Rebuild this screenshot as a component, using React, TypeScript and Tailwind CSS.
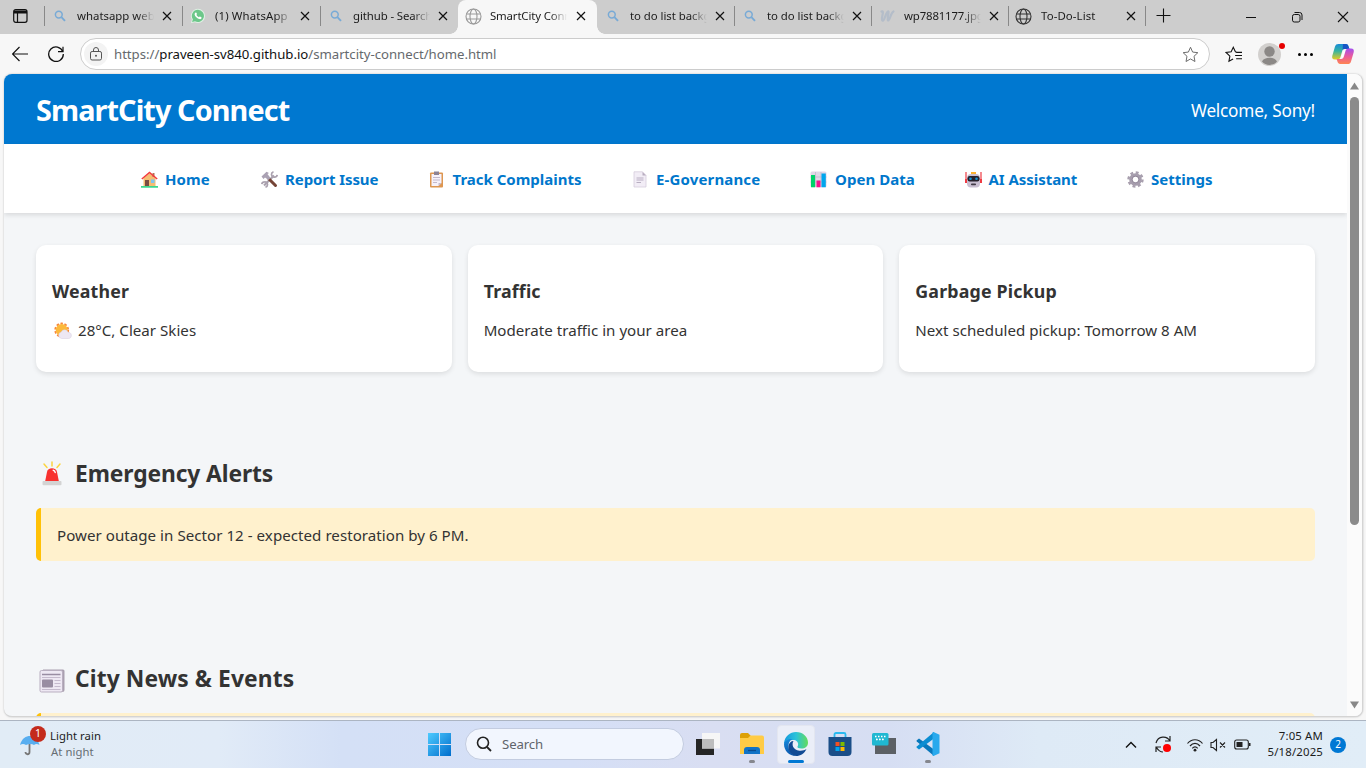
import React from "react";

type Kids = { children?: React.ReactNode };

const Svg = ({ className, box = "0 0 16 16", children }: Kids & { className: string; box?: string }) => (
  <svg className={`shrink-0 ${className}`} viewBox={box} fill="none">{children}</svg>
);

/* ---------- Browser tab icons ---------- */

const Magnifier = () => (
  <Svg className="size-4">
    <circle cx="6.8" cy="6.6" r="3.4" stroke="#78aad6" strokeWidth="1.5" />
    <path d="M9.4 9.2 13 12.8" stroke="#78aad6" strokeWidth="1.9" />
  </Svg>
);

const WhatsApp = () => (
  <Svg className="size-4">
    <path d="M8 .8a7 7 0 0 1 0 14.2 7.5 7.5 0 0 1-3.3-.8L.8 15.3l1.1-3.8A7.1 7.1 0 0 1 8 .8Z" fill="#dff0e4" />
    <path d="M8 1.8a6.1 6.1 0 1 1-3 11.5l-2.9.8.8-2.8A6.1 6.1 0 0 1 8 1.8Z" fill="#6cc78a" />
    <path d="M5.6 4.5c.5-.3.8 0 1 .6l.3.8c.1.5-.6.8-.5 1.1.5 1 1.4 1.8 2.5 2.3.4.1.7-.8 1.1-.7l1.3.6c.6.3.2 1.4-.5 1.8-1.7.8-6.2-2.3-6.2-4.8 0-.7.4-1.4 1-1.7Z" fill="#fff" />
  </Svg>
);

const Globe = ({ color }: { color: string }) => (
  <Svg className="size-[17px]" box="0 0 17 17">
    <g stroke={color} strokeWidth="1.1">
      <circle cx="8.5" cy="8.5" r="7.5" />
      <ellipse cx="8.5" cy="8.5" rx="3.5" ry="7.5" />
      <path d="M1.5 6h14M1.5 11h14" />
    </g>
  </Svg>
);

const WaveMark = () => (
  <Svg className="size-4">
    <path d="M2.500 3.500c2-1 1.500 1.500.8 4.500-.8 3.500-.3 5 .9 4.500C6 11.500 6.500 5 9 3.500c1.800-.8-1.500 8 0 9C10.800 13 11.500 5 14.500 3.500" stroke="#b4bdc9" strokeWidth="2.200" strokeLinecap="round" />
  </Svg>
);

const Close = () => (
  <Svg className="size-[10px]" box="0 0 10 10">
    <path d="m1 1 8 8M9 1 1 9" stroke="#111" strokeWidth="1.2" />
  </Svg>
);

type TabInfo = { title: string; icon: React.ReactNode; size: string; kind?: "active" | "plain" };

const tabs: TabInfo[] = [
  { title: "whatsapp web", icon: <Magnifier />, size: "w-[138px] tracking-[0px]" },
  { title: "(1) WhatsApp", icon: <WhatsApp />, size: "w-[138px] tracking-[0.12px]" },
  { title: "github - Search", icon: <Magnifier />, size: "w-[138px] tracking-[-0.1px]" },
  { title: "SmartCity Connect", icon: <Globe color="#999" />, size: "w-[139px] tracking-[-0.15px]", kind: "active" },
  { title: "to do list background", icon: <Magnifier />, size: "w-[137px] tracking-[-0.05px]", kind: "plain" },
  { title: "to do list background", icon: <Magnifier />, size: "w-[137px] tracking-[-0.05px]" },
  { title: "wp7881177.jpg", icon: <WaveMark />, size: "w-[137px] tracking-[-0.15px]" },
  { title: "To-Do-List", icon: <Globe color="#333" />, size: "w-[137px] tracking-[0.1px]" },
];

function Tab({ tab }: { tab: TabInfo }) {
  const active = tab.kind === "active";
  return (
    <div className={`relative flex h-[34px] shrink-0 items-center ${tab.size} ${active ? "rounded-t-lg bg-[#f7f7f7]" : "pb-0.5"}`}>
      {active && (
        <>
          <div className="absolute -left-2 bottom-0 size-2 bg-[radial-gradient(circle_at_0_0,transparent_7.5px,#f7f7f7_8px)]" />
          <div className="absolute -right-2 bottom-0 size-2 bg-[radial-gradient(circle_at_100%_0,transparent_7.5px,#f7f7f7_8px)]" />
        </>
      )}
      <div className={`h-5 w-px ${tab.kind ? "" : "bg-[#888]"}`} />
      <div className={`ml-1.5 flex w-[17px] justify-center ${active ? "pb-0.5" : ""}`}>{tab.icon}</div>
      <div className={`w-[77px] overflow-hidden whitespace-nowrap text-[11.4px] leading-4 text-[#1b1b1b] [mask-image:linear-gradient(to_right,black_78%,transparent)] ${active ? "ml-2 pb-0.5" : "ml-[9px]"}`}>{tab.title}</div>
      <div className={`${active ? "ml-[9px] pb-0.5" : "ml-2"}`}><Close /></div>
    </div>
  );
}

function TabStrip() {
  return (
    <div className="flex h-[34px] bg-[#cdcdcd]">
      <div className="flex w-11 shrink-0 pl-[13px] pt-[9px]">
        <Svg className="size-[15px]" box="0 0 15 15">
          <rect x=".7" y=".7" width="13.3" height="12.6" rx="2" stroke="#111" strokeWidth="1.2" />
          <path d="M1 1.5h13v3H1z" fill="#111" />
          <path d="M4.5 4v9" stroke="#111" strokeWidth="1.2" />
        </Svg>
      </div>
      {tabs.map((tab, i) => <Tab key={i} tab={tab} />)}
      <div className="mt-1.5 h-5 w-px bg-[#888]" />
      <Svg className="ml-2.5 mt-2 size-[15px]" box="0 0 15 15"><path d="M7.5.5v14M.5 7.500h14" stroke="#111" strokeWidth="1.1" /></Svg>
      <div className="ml-auto flex pr-[17px] pt-[11px]">
        <Svg className="size-3" box="0 0 12 12"><path d="M1 6.500h10" stroke="#111" /></Svg>
        <Svg className="ml-[34px] size-3" box="0 0 12 12">
          <rect x="1.5" y="3.5" width="7.5" height="7.5" rx="1.8" stroke="#111" />
          <path d="M3.5 1.500h5a2.500 2.500 0 0 1 2.500 2.500v5" stroke="#111" />
        </Svg>
        <Svg className="ml-[34px] size-3" box="0 0 12 12"><path d="m1 1 10 10M11 1 1 11" stroke="#111" strokeWidth="1.1" /></Svg>
      </div>
    </div>
  );
}

const Copilot = () => (
  <Svg className="size-6" box="0 0 24 24">
    <defs>
      <linearGradient id="coA" x1="0" y1="0" x2="0" y2="1"><stop stopColor="#188bd8" /><stop offset=".45" stopColor="#35b3a2" /><stop offset="1" stopColor="#e7cb21" /></linearGradient>
      <linearGradient id="coB" x1="0" y1="0" x2="0" y2="1"><stop stopColor="#a34ff0" /><stop offset=".5" stopColor="#e95a9c" /><stop offset="1" stopColor="#ff8551" /></linearGradient>
    </defs>
    <path d="M7.500 2h7.200c2 0 2.500 1.200 3 2.900l.7 2.100h-4.600c-1.500 0-2.200.8-2.700 2.400L9.500 15c-.5 1.600-1.200 2.500-2.900 2.500H4c-2.500 0-3.300-1.500-2.700-3.800L4 4.600C4.600 2.800 5.600 2 7.500 2Z" fill="url(#coA)" />
    <path d="M12 2h2.700c2 0 2.500 1.200 3 2.900l.7 2.100h-4.600c-1.500 0-1.700.3-2.200 1Z" fill="#1756c5" />
    <path d="M16.500 22H9.300c-2 0-2.500-1.200-3-2.900L5.600 17h4.600c1.500 0 2.200-.8 2.700-2.400L14.500 9c.5-1.600 1.200-2.500 2.900-2.500H20c2.500 0 3.300 1.500 2.700 3.800L20 19.400c-.6 1.800-1.600 2.600-3.500 2.600Z" fill="url(#coB)" />
    <path d="M12.800 8.500h1.400l-2.500 7h-1.300Z" fill="#fff" />
  </Svg>
);

const star = "M8 1.200 10 5.700l4.900.6-3.600 3.400.9 4.900L8 12.200l-4.200 2.400.9-4.900L1.100 6.300 6 5.700Z";

function Toolbar() {
  return (
    <div className="flex h-10 shrink-0 items-center pl-3">
      <Svg className="size-4"><path d="M.5 8H16M7.500 1 .5 8l7 7" stroke="#111" strokeWidth="1.2" /></Svg>
      <Svg className="ml-5 size-4">
        <path d="M14.800 5.500A7.300 7.300 0 1 0 15.300 8" stroke="#111" strokeWidth="1.3" />
        <path d="M15 .7v5h-5" stroke="#111" strokeWidth="1.2" />
      </Svg>
      <div className="ml-4 flex h-8 w-[1130px] shrink-0 items-center rounded-full border border-[#ccc] bg-white pl-[3px]">
        <div className="flex size-6 items-center justify-center rounded-full bg-[#f3f3f3]">
          <Svg className="mb-px size-[14px]" box="0 0 14 14">
            <rect x="1.5" y="4.5" width="11" height="8.5" rx="1.6" stroke="#555" />
            <path d="M4.500 4.500V3a2.500 2.500 0 0 1 5 0v1.500" stroke="#555" /><circle cx="7" cy="8.700" r="1" fill="#555" />
          </Svg>
        </div>
        <div className="ml-1.5 mt-px whitespace-nowrap text-[13.2px] tracking-[-0.02px] text-[#65696d]">
          https://<span className="text-[#111]">praveen-sv840.github.io</span>/smartcity-connect/home.html
        </div>
        <Svg className="ml-auto mr-2.5 size-[17px]"><path d={star} stroke="#666" strokeWidth=".9" /></Svg>
      </div>
      <Svg className="ml-[15px] size-[17px]">
        <path d="M11 6 9.800 5.500 7.800 1.200 5.800 5.500l-4.800.6 3.600 3.400-.9 4.900 3.900-2.200" stroke="#111" />
        <path d="M10.500 6h5.500M9.500 9h6.500M10.500 12h5.500" stroke="#111" />
      </Svg>
      <div className="relative ml-4">
        <Svg className="size-[23px]" box="0 0 23 23">
          <circle cx="11.5" cy="11.5" r="11.5" fill="#d2d0ce" /><circle cx="11.5" cy="8.5" r="5.2" fill="#8b8886" />
          <path d="M4 18.500c2-5 13-5 15 0-3.500 4.500-11.500 4.500-15 0Z" fill="#8b8886" />
        </Svg>
        <div className="absolute -right-1 top-0 size-1.5 rounded-full bg-[#e60000]" />
      </div>
      <div className="ml-[17px] flex gap-[3px]">
        <i className="size-[3px] rounded-full bg-black" /><i className="size-[3px] rounded-full bg-black" /><i className="size-[3px] rounded-full bg-black" />
      </div>
      <div className="ml-[18px]"><Copilot /></div>
    </div>
  );
}

/* ---------- Page icons ---------- */

const House = () => (
  <Svg className="mb-px size-[17px]" box="0 0 17 17">
    <path d="M2.500 7 8.500 2.200 14.500 7v8.500h-12z" fill="#f5bd73" /><path d="M11.500 2h2v4h-2z" fill="#b77455" />
    <path d="m.8 8 7.700-6.500L16.200 8" stroke="#f23b3e" strokeWidth="1.5" />
    <path d="M4 9h4v6H4z" fill="#7b4c42" /><path d="M10 8.500h3.500v3.500H10z" fill="#80c5ee" /><path d="M0 15h17v1.700H0z" fill="#3dd78e" />
  </Svg>
);
const Tools = () => (
  <Svg className="mb-px size-[17px]" box="0 0 17 17">
    <path d="M3 14.500 13 4.500" stroke="#aaa1ae" strokeWidth="2.2" />
    <path d="M12.500.8c-3 1-2.500 5.500 1 5.300 1.500 0 2.500-1 2.700-2.300M4.500 16.200c3-1 2.500-5.500-1-5.300-1.500 0-2.500 1-2.700 2.300" stroke="#aaa1ae" strokeWidth="1.7" />
    <path d="m8 8 6.500 6.500" stroke="#754536" strokeWidth="3" strokeLinecap="round" />
    <path d="M.5 5.500 5.500.8 8 2l-1.500 1L9.500 7 7.500 9 4 6.500 2.500 8Z" fill="#aaa1b3" />
  </Svg>
);
const Clipboard = () => (
  <Svg className="mb-px size-[17px]" box="0 0 17 17">
    <rect x="1" y="1.5" width="13" height="15" rx="1" fill="#dd9650" /><path d="M2.500 3h10v9l-3 3h-7z" fill="#f6f1fa" />
    <path d="M9.500 15v-3h3z" fill="#c3b9cc" /><path d="M5 .5h5V4H5z" fill="#8c8295" /><path d="M4 6.500h7M4 9h7M4 11.500h4" stroke="#c3b9cc" />
  </Svg>
);
const Page = () => (
  <Svg className="mb-px size-[17px]" box="0 0 17 17">
    <path d="M2 .8h8.500L14 4.300V16H2z" fill="#f2edf6" stroke="#d6cddd" strokeWidth=".8" /><path d="M10.500 1v3.500H14" fill="#b8aebf" />
    <path d="M4.500 7h7M4.500 9h7M4.500 11.500H9" stroke="#b8aec1" strokeWidth="1.1" />
  </Svg>
);
const Bars = () => (
  <Svg className="mb-px -ml-px mr-px size-[17px]" box="0 0 17 17">
    <rect x=".5" y=".5" width="16" height="15.8" rx="1.5" fill="#dfd8e7" /><path d="M5.500 1v15M11 1v15M.5 6h16M.5 11h16" stroke="#bdb4c7" strokeWidth=".7" />
    <path d="M1 4h4v12.300H1z" fill="#00d26a" /><path d="M6.500 9.500h4v6.800h-4z" fill="#f8128d" /><path d="M11.500 2.500h4.300v13.800h-4.300z" fill="#00a6ed" />
  </Svg>
);
const Robot = () => (
  <Svg className="mb-px size-[17px]" box="0 0 17 17">
    <path d="M1 1v10M16 1v10" stroke="#ef3b43" strokeWidth="1.2" /><path d="M0 8h3v4H0zM14 8h3v4h-3z" fill="#ef3b43" />
    <path d="M6 1h5v3H6z" fill="#fbb12e" /><rect x="2" y="3" width="13" height="13.5" rx="4" fill="#c8bed0" />
    <rect x="2.5" y="5" width="12" height="5.5" rx="2.2" fill="#25202a" /><circle cx="5.5" cy="7.7" r="1.3" fill="#1695d4" /><circle cx="11.5" cy="7.700" r="1.3" fill="#1695d4" />
    <rect x="6" y="12.5" width="5" height="1.7" rx=".8" fill="#413b46" />
  </Svg>
);
const Gear = () => (
  <Svg className="mb-px size-[17px]" box="0 0 17 17">
    <circle cx="8.5" cy="8.5" r="7" stroke="#a89fae" strokeWidth="2.4" strokeDasharray="2.9 2.6" />
    <circle cx="8.5" cy="8.5" r="4.7" stroke="#a69dad" strokeWidth="3.2" />
    <circle cx="8.5" cy="8.5" r="3.3" stroke="#81768a" strokeWidth=".7" />
  </Svg>
);

const nav = [
  { label: "Home", icon: <House />, cls: "w-[120px] tracking-[0.1px]" },
  { label: "Report Issue", icon: <Tools />, cls: "w-[167.5px] tracking-[-0.08px]" },
  { label: "Track Complaints", icon: <Clipboard />, cls: "w-[203.5px] tracking-[0px]" },
  { label: "E-Governance", icon: <Page />, cls: "w-[179px] tracking-[0.15px]" },
  { label: "Open Data", icon: <Bars />, cls: "w-[153.5px] tracking-[0.05px]" },
  { label: "AI Assistant", icon: <Robot />, cls: "w-[162.5px] tracking-[-0.05px]" },
  { label: "Settings", icon: <Gear />, cls: "w-[90px] tracking-[0px]" },
];

const SunCloud = () => (
  <Svg className="size-[18px]" box="0 0 18 18">
    <circle cx="7.7" cy="8" r="6.5" stroke="#f9863a" strokeWidth="1.8" strokeDasharray="2.5 1.58" />
    <circle cx="7.7" cy="8" r="6" fill="#fcb93c" />
    <path d="M7.500 16.500a3.300 3.300 0 0 1-.2-6.500c1-3 5.800-3 6.700.3 4.500-.1 4.300 6.200.5 6.200Z" fill="#ede7f3" stroke="#d5cbdd" strokeWidth=".5" />
  </Svg>
);
const Siren = () => (
  <Svg className="size-[26px]" box="0 0 26 26">
    <path d="M6 21 8 11c.5-5 9.500-5 10 0l2 10Z" fill="#f8312f" /><path d="M14.200 9.200c1.300.2 1.800 1 2 2.300" stroke="#fff" strokeWidth="1.5" strokeLinecap="round" />
    <path d="M13 1v4M5 3l3 3.500M21 3l-3 3.500" stroke="#fcd53f" strokeWidth="1.5" strokeLinecap="round" /><rect x="3.500" y="20" width="19" height="4.300" rx="1" fill="#d3d3d3" />
  </Svg>
);
const Newspaper = () => (
  <Svg className="mt-1 size-[26px]" box="0 0 26 26">
    <path d="M4 1.500h20a1.500 1.500 0 0 1 1.500 1.500v19a2 2 0 0 1-2 2H5Z" fill="#aaa0b0" /><rect x="1" y="2.5" width="22.500" height="21.500" rx="1.5" fill="#eee8f3" stroke="#b9afc0" />
    <path d="M3 6.500h18.500" stroke="#998da2" strokeWidth="1.6" /><path d="M3 9.500h18.500M15.500 12.500h6M15.500 15.500h6M15.500 18.500h6M3 21.500h18.500" stroke="#c5bacd" strokeWidth="1.2" />
    <rect x="3" y="11.500" width="11" height="8" rx="1" fill="#998da2" />
  </Svg>
);

function Card({ title, children }: Kids & { title: string }) {
  return (
    <section className="h-[127px] rounded-[10px] bg-white px-4 pt-[34px] shadow-[0_2px_5px_rgba(0,0,0,0.1)]">
      <h3 className="text-[17.8px] font-bold leading-6 tracking-[0.17px]">{title}</h3>
      <div className="mt-[15px] flex items-center whitespace-nowrap text-[15.1px] leading-6 tracking-[0.02px]">{children}</div>
    </section>
  );
}

function Heading({ icon, children, tracking }: Kids & { icon: React.ReactNode; tracking: string }) {
  return <h2 className={`flex h-8 items-center gap-[10px] whitespace-nowrap pl-[3px] text-[22.8px] font-bold leading-8 ${tracking}`}>{icon}{children}</h2>;
}

function Website() {
  return (
    <div className="ml-1 flex h-[643px] w-[1359px] shrink-0 overflow-hidden rounded-lg border-b border-r border-[#d4d4d4] bg-[#f4f6f8] text-[#333] shadow-[0_0_2px_rgba(0,0,0,0.25)]">
      <div className="w-[1343px] shrink-0">
        <header className="flex h-[70px] items-center justify-between bg-[#0078d0] px-8 text-white">
          <h1 className="whitespace-nowrap pt-0.5 text-[28.8px] font-bold tracking-[-0.9px]">SmartCity Connect</h1>
          <div className="whitespace-nowrap pt-1 text-[17.2px] tracking-[-0.22px]">Welcome, Sony!</div>
        </header>
        <nav className="flex h-[69px] items-center bg-white pl-[137px] pt-0.5 shadow-[0_2px_5px_rgba(0,0,0,0.12)]">
          {nav.map((n) => (
            <a key={n.label} className={`flex shrink-0 items-center gap-[7px] whitespace-nowrap text-[15px] font-bold text-[#0077cc] ${n.cls}`}>{n.icon}<span>{n.label}</span></a>
          ))}
        </nav>
        <main className="px-8 pt-8">
          <div className="grid grid-cols-3 gap-4">
            <Card title="Weather"><span className="ml-0.5 mr-1.5 mt-0.5"><SunCloud /></span>28°C, Clear Skies</Card>
            <Card title="Traffic">Moderate traffic in your area</Card>
            <Card title="Garbage Pickup">Next scheduled pickup: Tomorrow 8 AM</Card>
          </div>
          <div className="pt-[86px]"><Heading icon={<Siren />} tracking="tracking-[-0.1px]">Emergency Alerts</Heading></div>
          <div className="mt-[18px] flex h-[53px] items-center rounded-[5px] border-l-[5px] border-[#ffc107] bg-[#fff1cd] pl-4 pt-0.5 text-[15.1px] tracking-[0.04px]">Power outage in Sector 12 - expected restoration by 6 PM.</div>
          <div className="pt-[102px]"><Heading icon={<Newspaper />} tracking="tracking-[0.1px]">City News &amp; Events</Heading></div>
          <div className="mt-[18px] h-[53px] rounded-[5px] border-l-[5px] border-[#ffc107] bg-[#fff1cd]" />
        </main>
      </div>
      <div className="flex w-[15px] shrink-0 flex-col items-center bg-[#fbfbfb] pt-2">
        <Svg className="h-2 w-[9px]" box="0 0 9 8"><path d="M4.500.5 9 7.500H0Z" fill="#888" /></Svg>
        <div className="mt-[7px] h-[428px] w-[9px] rounded-full bg-[#8b8b8b]" />
        <Svg className="mt-auto mb-[7px] h-2 w-[9px]" box="0 0 9 8"><path d="M0 .5h9L4.500 7.500Z" fill="#888" /></Svg>
      </div>
    </div>
  );
}

/* ---------- Taskbar ---------- */

const WindowsLogo = () => (
  <Svg className="size-[23px]" box="0 0 23 23">
    <defs><linearGradient id="win" x1="0" y1="0" x2="23" y2="23" gradientUnits="userSpaceOnUse"><stop stopColor="#4ecbff" /><stop offset="1" stopColor="#006dcc" /></linearGradient></defs>
    <path d="M0 0h11v11H0zM12 0h11v11H12zM0 12h11v11H0zM12 12h11v11H12z" fill="url(#win)" />
  </Svg>
);
const TaskView = () => (
  <Svg className="size-6" box="0 0 24 24">
    <path d="M0 7h18v16H0z" fill="#252525" /><path d="M6 1h18v15.500H6z" fill="#f6f6f6" /><path d="M6 7h12v9.500H6z" fill="#bdbdbd" />
  </Svg>
);
const Folder = () => (
  <Svg className="size-6" box="0 0 24 24">
    <path d="M0 3a2 2 0 0 1 2-2h6l3 3h9v6H0Z" fill="#dda006" /><path d="M0 6h8l2.500-2.500H22a2 2 0 0 1 2 2V22H0Z" fill="#ffcb45" />
    <path d="M4 22v-4a3 3 0 0 1 3-3h10a3 3 0 0 1 3 3v4Z" fill="#1173c7" /><path d="M8 18.500h8" stroke="#0a4c8e" strokeWidth="1.3" />
  </Svg>
);
const Edge = () => (
  <Svg className="size-6" box="0 0 24 24">
    <defs>
      <linearGradient id="edA" x1="0" y1="8" x2="24" y2="8" gradientUnits="userSpaceOnUse"><stop stopColor="#1598dd" /><stop offset=".5" stopColor="#2bc2da" /><stop offset="1" stopColor="#64dc5b" /></linearGradient>
      <linearGradient id="edB" x1="0" y1="0" x2="0" y2="1"><stop stopColor="#1688dc" /><stop offset="1" stopColor="#0b56ab" /></linearGradient>
    </defs>
    <path d="M0 11C1 4 6 0 12 0c7 0 12 5 12 10.500 0 4-3 6-6.500 6-3 0-4.500-1-4-2 1.500-2 .5-6-3.500-6.500C6 7.500 2 9 0 12Z" fill="url(#edA)" />
    <path d="M0 12C1 8 5 6.500 8.500 7c-3 1.500-4 4-4 7 0 5 3.500 8.500 7.500 10C5 24 0 18.500 0 12Z" fill="url(#edB)" />
    <path d="M9.500 9c-2 3-1 9 6 9.700 3 .3 5-.7 7-1.700-2 4.500-6 7-10.500 7C7 23.500 4 18.500 4.500 14c.3-3 2.500-5 5-5Z" fill="#124b94" />
  </Svg>
);
const Store = () => (
  <Svg className="size-6" box="0 0 24 24">
    <path d="M6.500 6V2.500A1.500 1.500 0 0 1 8 1h8a1.500 1.500 0 0 1 1.500 1.500V6" stroke="#29b9ef" strokeWidth="1.8" />
    <path d="M.5 5h23v15a4 4 0 0 1-4 4h-15a4 4 0 0 1-4-4Z" fill="#1b4e88" />
    <path d="M7.500 10h4v4h-4z" fill="#f25022" /><path d="M12.500 10h4v4h-4z" fill="#7fba00" /><path d="M7.500 15h4v4h-4z" fill="#00a4ef" /><path d="M12.500 15h4v4h-4z" fill="#ffb900" />
  </Svg>
);
const Keyboard = () => (
  <Svg className="size-6" box="0 0 24 24">
    <path d="M3 6h21v16H3z" fill="#5c6065" /><rect width="16.500" height="12.500" y="1" rx="1.500" fill="#20b8d2" />
    <path d="M3 4.500h11M4 7.500h9" stroke="#fff" strokeWidth="1.3" strokeDasharray="1.500 1.500" /><path d="M4 7.300h9" stroke="#fff" strokeWidth="1.300" strokeDasharray="1.500 1.500" />
  </Svg>
);
const VSCode = () => (
  <Svg className="size-6" box="0 0 24 24">
    <path d="m.5 8.500 2.500-2L18 17.500V24L.8 9.500Z" fill="#0877bb" /><path d="m.5 15.500 2.500 2L18 6.500V0L.8 14.500Z" fill="#0b8dd2" />
    <path d="m17.500 0 6 2.800V21.300l-6 2.700c-.8 0-1-.5-1-1.300V1.300c0-.8.2-1.300 1-1.300Z" fill="#28a9ed" />
  </Svg>
);

const apps = [
  { icon: <TaskView />, state: "" },
  { icon: <Folder />, state: "run" },
  { icon: <Edge />, state: "active" },
  { icon: <Store />, state: "" },
  { icon: <Keyboard />, state: "" },
  { icon: <VSCode />, state: "run" },
];

function Taskbar() {
  return (
    <footer className="mt-auto flex h-12 shrink-0 border-t border-[#acb5c2] bg-[linear-gradient(90deg,#e1ecf6_0%,#e1ebf7_16%,#d4e0f6_25%,#d5dff6_42%,#d9def2_52%,#d6def3_65%,#deeaf6_76%,#e1edf7_100%)] text-[#1c1c1c]">
      <div className="flex w-[427px] shrink-0 pl-[19px] pt-[5px]">
        <div className="relative mt-2 h-7 w-[30px]">
          <Svg className="size-[23px]" box="0 0 23 23">
            <path d="M10.500 10v8c0 3-4 3-4 0" stroke="#777" strokeWidth="1.8" />
            <path d="M1 11C3 4 7 2 11 2s8 3 9.500 9c-2-1.500-4-1.500-5.500 0-2-1.500-5-1.500-8 0-2-1.500-4-1.500-6 0Z" fill="#58aef0" />
          </Svg>
          <div className="absolute -top-2 left-[11px] flex size-4 items-center justify-center rounded-full bg-[#c42b1c] text-[10.500px] text-white">1</div>
        </div>
        <div className="ml-px text-[11.3px] leading-4 tracking-[0.05px]"><div className="pt-0.5">Light rain</div><div className="pl-px text-[#666d73]">At night</div></div>
      </div>
      <div className="pl-px pt-3"><WindowsLogo /></div>
      <div className="ml-[14px] mt-[7px] flex h-8 w-[219px] shrink-0 items-center rounded-full border border-[#c3cce0] bg-[#f2f6fe] pl-2.5 text-[13.2px] tracking-[-0.1px] text-[#5f646b]">
        <Svg className="mr-2.5 size-4"><circle cx="7" cy="6.800" r="5.500" stroke="#222" strokeWidth="1.6" /><path d="m11 11 4 4" stroke="#222" strokeWidth="1.8" /></Svg><span className="pt-0.5">Search</span>
      </div>
      <div className="ml-[2px] flex pt-1">
        {apps.map((a, i) => (
          <div key={i} className="flex w-11 shrink-0 flex-col items-center">
            <div className={`flex h-[39px] w-[38px] flex-col items-center rounded ${a.state === "active" ? "border border-[#e3e6f0] bg-[#ebeef8] pt-[6px]" : "pt-[7px]"}`}>
              {a.icon}
              {a.state === "active" && <div className="mt-1 h-[3px] w-4 shrink-0 rounded-full bg-[#0078d4]" />}
              {a.state === "run" && <div className="mt-1 h-[3px] w-1.5 shrink-0 rounded-full bg-[#85878e]" />}
            </div>
          </div>
        ))}
      </div>
      <div className="ml-auto flex items-center">
        <Svg className="size-3" box="0 0 12 12"><path d="m1 8.500 5-5 5 5" stroke="#111" strokeWidth="1.4" /></Svg>
        <div className="relative ml-[18px]">
          <Svg className="size-[17px]" box="0 0 17 17">
            <path d="M1 7C3-.5 12-.5 15 5M15 0v5h-5M1 16v-5h5M1.500 11.500C3 14 5 16 8 16" stroke="#222" strokeWidth="1.2" />
          </Svg>
          <div className="absolute left-2 top-2 size-2 rounded-full bg-[#ff0000]" />
        </div>
        <Svg className="ml-[15px] size-4">
          <path d="M.5 6.500c4-5 11-5 15 0M3 9c3-3.500 7-3.500 10 0M5.300 11.300c1.700-2 3.700-2 5.400 0" stroke="#222" strokeWidth="1.2" /><circle cx="8" cy="13.200" r="1.400" fill="#222" />
        </Svg>
        <Svg className="ml-[7px] size-4">
          <path d="M1 5.500h2L6.500 2.500v11L3 10.500H1ZM10 5.500l5 5M15 5.500l-5 5" stroke="#222" strokeWidth="1.1" />
        </Svg>
        <Svg className="ml-2 size-[17px]" box="0 0 17 17"><rect x=".7" y="4" width="13.6" height="9" rx="2" stroke="#222" strokeWidth="1.1" /><path d="M2.500 6h6v5h-6zM15 7h1.500v3H15z" fill="#222" /></Svg>
        <div className="ml-4 whitespace-nowrap pb-0.5 text-right text-[11.4px] leading-4"><div className="tracking-[0.15px]">7:05 AM</div><div className="tracking-[0.16px]">5/18/2025</div></div>
        <div className="ml-[7px] mr-5 flex size-4 items-center justify-center rounded-full bg-[#0078d4] text-[10px] text-white">2</div>
      </div>
    </footer>
  );
}

export default function App() {
  return (
    <div className="flex h-[768px] w-[1366px] flex-col overflow-hidden bg-[#f7f7f7] [font-family:'Noto_Sans','Open_Sans',sans-serif]">
      <TabStrip />
      <Toolbar />
      <Website />
      <Taskbar />
    </div>
  );
}
